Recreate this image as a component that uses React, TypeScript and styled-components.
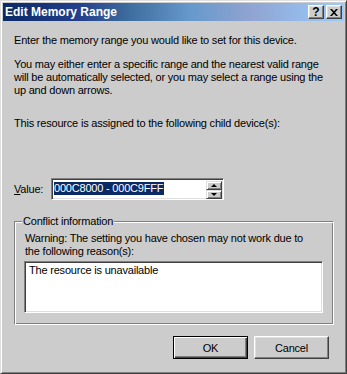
import React from "react";
import styled, { createGlobalStyle } from "styled-components";

const GlobalStyle = createGlobalStyle`
  html, body {
    margin: 0;
    padding: 0;
    background: #cccccc;
  }
  body {
    font-family: "Liberation Sans", Arial, sans-serif;
    font-size: 11px;
    letter-spacing: -0.2px;
    color: #000000;
  }
`;

const App: React.FC = () => {
  return (
    <>
      <GlobalStyle />
      <Window>
        <TitleBar>
          <TitleText>Edit Memory Range</TitleText>
          <CaptionButtons>
            <CaptionButton>?</CaptionButton>
            <CaptionButton>
              <svg width="8" height="7" viewBox="0 0 8 7">
                <path
                  d="M0 0h2l2 2.3L6 0h2L5 3.5 8 7H6L4 4.7 2 7H0l3-3.5z"
                  fill="#000"
                />
              </svg>
            </CaptionButton>
          </CaptionButtons>
        </TitleBar>
        <Body>
          <Text>Enter the memory range you would like to set for this device.</Text>
          <Text $top={11}>
            You may either enter a specific range and the nearest valid range
            <br />
            will be automatically selected, or you may select a range using the
            <br />
            up and down arrows.
          </Text>
          <Text $top={20}>
            This resource is assigned to the following child device(s):
          </Text>
          <ValueRow>
            <ValueLabel>
              <u>V</u>alue:
            </ValueLabel>
            <EditBox>
              <Selected>000C8000 - 000C9FFF</Selected>
              <Spinner>
                <SpinButton>
                  <Arrow $up />
                </SpinButton>
                <SpinButton>
                  <Arrow />
                </SpinButton>
              </Spinner>
            </EditBox>
          </ValueRow>
          <GroupBox>
            <Legend>Conflict information</Legend>
            <GroupInner>
              <Text>
                Warning: The setting you have chosen may not work due to
                <br />
                the following reason(s):
              </Text>
              <ListBox>The resource is unavailable</ListBox>
            </GroupInner>
          </GroupBox>
          <ButtonRow>
            <PushButton $default>OK</PushButton>
            <PushButton>Cancel</PushButton>
          </ButtonRow>
        </Body>
      </Window>
    </>
  );
};

export default App;

const Window = styled.div`
  width: 347px;
  height: 374px;
  box-sizing: border-box;
  background: #cccccc;
  border: 1px solid;
  border-color: #dfdfdf #404040 #404040 #dfdfdf;
  box-shadow: inset 1px 1px #ffffff, inset -1px -1px #808080;
  padding: 2px;
  display: flex;
  flex-direction: column;
`;
const TitleBar = styled.div`
  height: 18px;
  display: flex;
  align-items: center;
  padding-left: 2px;
  background: linear-gradient(
    90deg,
    #0a2a66 0%,
    #233f8c 22%,
    #3c6a9c 36%,
    #6699cc 55%,
    #8fa3d0 72%,
    #99ccff 100%
  );
`;
const TitleText = styled.div`
  font-weight: bold;
  font-size: 12px;
  letter-spacing: 0;
  color: #ffffff;
  flex: 1;
`;
const CaptionButtons = styled.div`
  display: flex;
  gap: 2px;
  margin-right: 2px;
`;
const CaptionButton = styled.div`
  width: 16px;
  height: 14px;
  box-sizing: border-box;
  background: #cccccc;
  border: 1px solid;
  border-color: #ffffff #404040 #404040 #ffffff;
  box-shadow: inset -1px -1px #808080, inset 1px 1px #dfdfdf;
  display: flex;
  align-items: center;
  justify-content: center;
  font-weight: bold;
  font-size: 12px;
  letter-spacing: 0;
  line-height: 12px;
`;
const Body = styled.div`
  padding: 13px 10px 0 11px;
  display: flex;
  flex-direction: column;
`;
const Text = styled.div<{ $top?: number }>`
  line-height: 13px;
  margin-top: ${(p) => p.$top ?? 0}px;
  white-space: nowrap;
`;
const ValueRow = styled.div`
  display: flex;
  align-items: center;
  margin-top: 48px;
`;
const ValueLabel = styled.div`
  width: 37px;
  line-height: 13px;
`;
const Sunken = styled.div`
  box-sizing: border-box;
  background: #ffffff;
  border: 1px solid;
  border-color: #808080 #ffffff #ffffff #808080;
  box-shadow: inset 1px 1px #404040, inset -1px -1px #dfdfdf;
`;
const EditBox = styled(Sunken)`
  width: 173px;
  height: 22px;
  padding: 2px 1px 1px 2px;
  display: flex;
  align-items: flex-start;
`;
const Selected = styled.span`
  margin-top: 1px;
  background: #0a2a66;
  color: #ffffff;
  line-height: 13px;
  padding-right: 1px;
`;
const Spinner = styled.div`
  margin-left: auto;
  display: flex;
  flex-direction: column;
`;
const SpinButton = styled.div`
  width: 16px;
  height: 9px;
  box-sizing: border-box;
  background: #cccccc;
  border: 1px solid;
  border-color: #dfdfdf #404040 #404040 #dfdfdf;
  box-shadow: inset 1px 1px #ffffff, inset -1px -1px #808080;
  display: flex;
  align-items: center;
  justify-content: center;
`;
const Arrow = styled.div<{ $up?: boolean }>`
  width: 0;
  height: 0;
  border-left: 3px solid transparent;
  border-right: 3px solid transparent;
  ${(p) =>
    p.$up ? "border-bottom: 3px solid #000;" : "border-top: 3px solid #000;"}
`;
const GroupBox = styled.fieldset`
  margin: 15px 0 0 0;
  padding: 0;
  width: 320px;
  box-sizing: border-box;
  border: 1px solid;
  border-color: #808080 #ffffff #ffffff #808080;
  box-shadow: inset 1px 1px #ffffff, inset -1px -1px #808080;
`;
const Legend = styled.legend`
  margin-left: 7px;
  padding: 0 1px;
  line-height: 13px;
  background: #cccccc;
`;
const GroupInner = styled.div`
  padding: 4px 10px 11px 10px;
  display: flex;
  flex-direction: column;
`;
const ListBox = styled(Sunken)`
  margin: 3px 0 0 -1px;
  width: 299px;
  height: 52px;
  padding: 2px 4px;
  line-height: 13px;
`;
const ButtonRow = styled.div`
  display: flex;
  justify-content: flex-end;
  gap: 6px;
  margin: 11px 5px 0 0;
`;
const PushButton = styled.div<{ $default?: boolean }>`
  width: 75px;
  height: 23px;
  box-sizing: border-box;
  display: flex;
  align-items: center;
  justify-content: center;
  background: #cccccc;
  border: 1px solid;
  ${(p) =>
    p.$default
      ? `border-color: #000000;
         box-shadow: inset 1px 1px #ffffff, inset -1px -1px #404040, inset -2px -2px #808080;`
      : `border-color: #ffffff #404040 #404040 #ffffff;
         box-shadow: inset -1px -1px #808080, inset 1px 1px #dfdfdf;`}
`;
